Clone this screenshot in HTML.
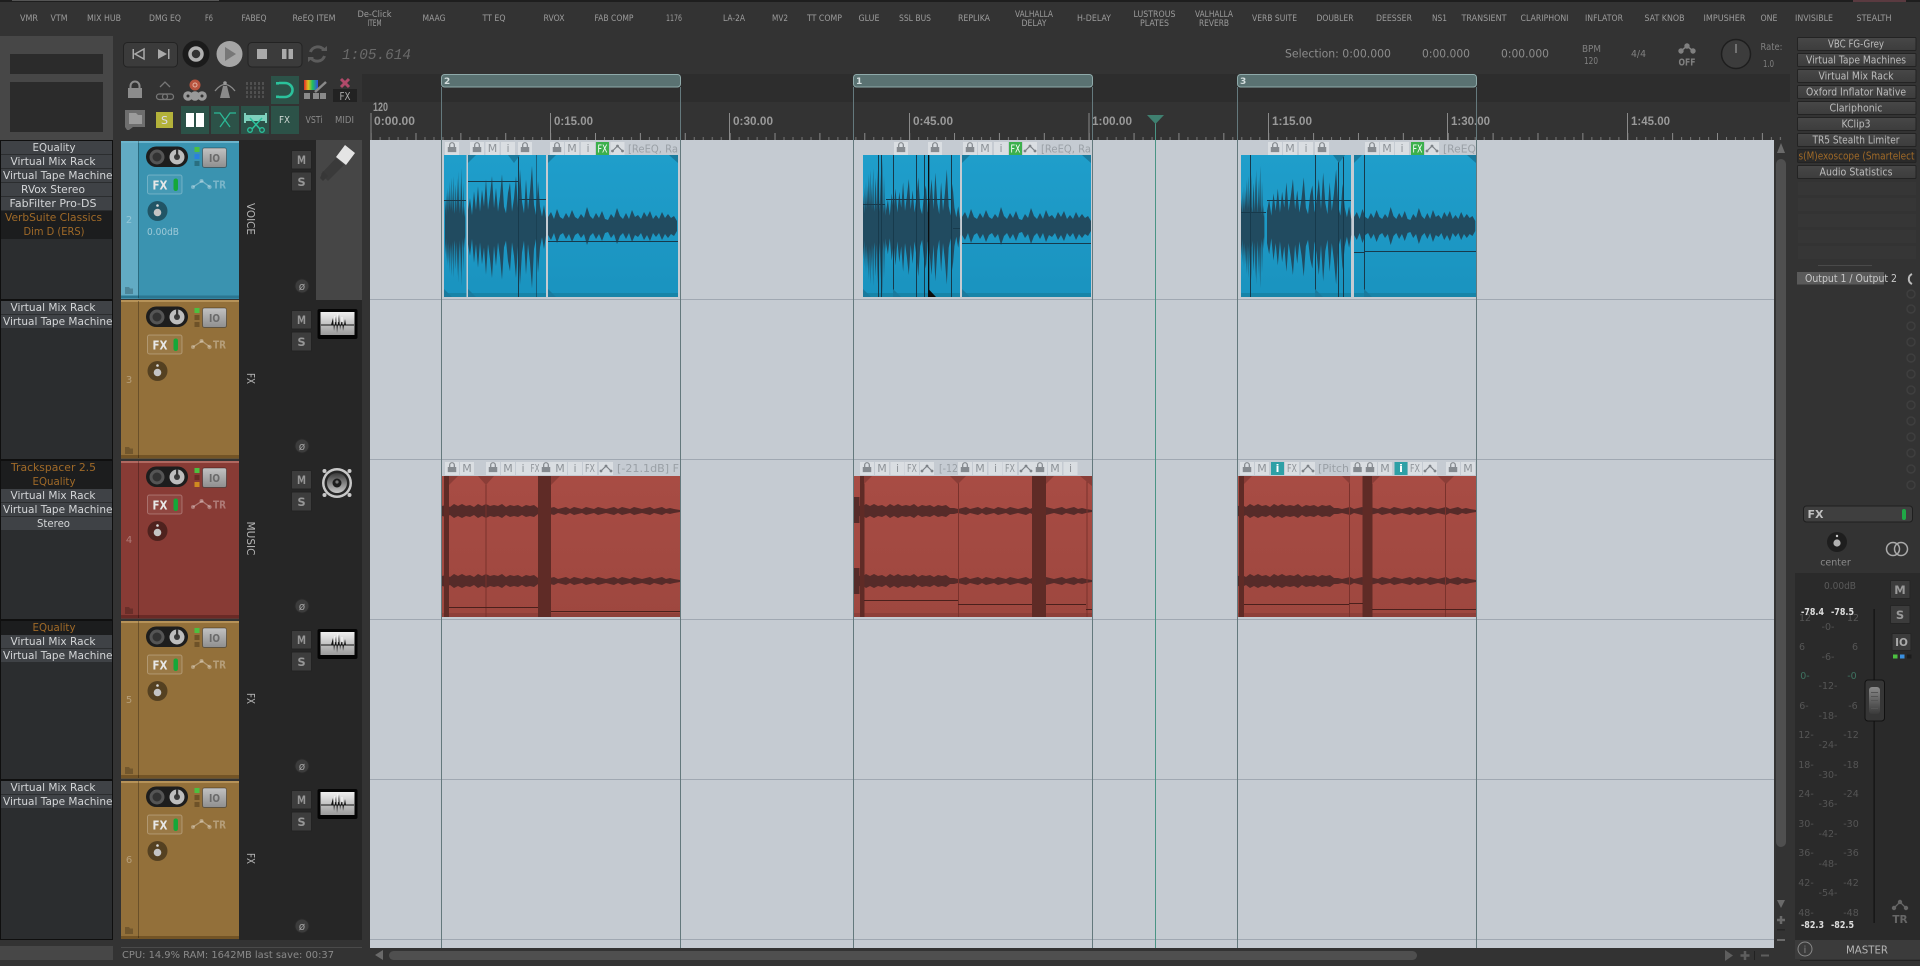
<!DOCTYPE html>
<html><head><meta charset="utf-8"><style>
html,body{margin:0;padding:0;background:#333;width:1920px;height:966px;overflow:hidden}
svg{display:block}
text{font-family:"DejaVu Sans","Liberation Sans",sans-serif}
.tb text{font-size:9px;fill:#9c9c9c;text-anchor:middle}
.fx text{font-size:10.5px;fill:#d4d6d8;text-anchor:middle}
.fx .o{fill:#a06a28}
.rb text{font-size:10.5px;fill:#bdbdbd;text-anchor:middle}
.rl text{font-family:"Liberation Sans",sans-serif;font-weight:bold;font-size:12px;fill:#999}
.ih text{font-size:11px;fill:#8f9499;text-anchor:middle}
.sc text{font-size:9.5px;fill:#555;text-anchor:middle}
.pk text{font-size:9.5px;fill:#ddd;font-weight:bold;text-anchor:middle}
</style></head><body>
<svg width="1920" height="966" viewBox="0 0 1920 966" xmlns="http://www.w3.org/2000/svg">
<defs>
<linearGradient id="bl" x1="0" y1="0" x2="0" y2="1"><stop offset="0" stop-color="#1f9ecb"/><stop offset="1" stop-color="#1a93bf"/></linearGradient>
<linearGradient id="rd" x1="0" y1="0" x2="0" y2="1"><stop offset="0" stop-color="#a84c44"/><stop offset="1" stop-color="#9e473f"/></linearGradient>
<linearGradient id="io" x1="0" y1="0" x2="0" y2="1"><stop offset="0" stop-color="#c2c2c2"/><stop offset="1" stop-color="#8e8e8e"/></linearGradient>
<linearGradient id="wi" x1="0" y1="0" x2="0" y2="1"><stop offset="0" stop-color="#f0f0f0"/><stop offset="1" stop-color="#9a9a9a"/></linearGradient>
<linearGradient id="fb" x1="0" y1="0" x2="0" y2="1"><stop offset="0" stop-color="#8a8a8a"/><stop offset="1" stop-color="#3a3a3a"/></linearGradient>
<linearGradient id="bt" x1="0" y1="0" x2="0" y2="1"><stop offset="0" stop-color="#484848"/><stop offset="1" stop-color="#3c3c3c"/></linearGradient>
<linearGradient id="cone" x1="0" y1="0" x2="0" y2="1"><stop offset="0" stop-color="#3a3a3a"/><stop offset="1" stop-color="#c8c8c8"/></linearGradient>
<linearGradient id="rb" x1="0" y1="0" x2="1" y2="0"><stop offset="0" stop-color="#e02828"/><stop offset=".3" stop-color="#e0c020"/><stop offset=".6" stop-color="#20c060"/><stop offset="1" stop-color="#3050e0"/></linearGradient>
<pattern id="tk" x="370.6" y="130" width="44.88" height="10" patternUnits="userSpaceOnUse">
<rect x="0" y="3" width="1" height="7" fill="#8a8a8a"/><rect x="9" y="7" width="1" height="3" fill="#777"/><rect x="18" y="7" width="1" height="3" fill="#777"/><rect x="27" y="7" width="1" height="3" fill="#777"/><rect x="36" y="7" width="1" height="3" fill="#777"/>
</pattern>

<path id="bh" d="M0 0V-20L2-34L4-14L6-42L8-20L10-48L12-18L14-44L16-24L18-56L20-20L22-38L24-60L26-22L28-46L30-18L32-36L34-62L36-24L38-16L40-40L42-52L44-18L46-34L48-60L50-22L52-68L54-30L56-16L58-56L60-20L62-42L64-72L66-26L68-14L70-54L72-24L74-12L76-26L78-10V0Z"/>
<g id="burst"><use href="#bh"/><use href="#bh" transform="scale(1,-1)"/></g>
<path id="th" d="M0 0V-9L3-14L6-7L9-17L12-9L15-7L18-13L21-8L24-16L27-9L30-7L33-12L36-8L39-19L42-10L45-7L48-13L51-8L54-15L57-7L60-6L63-12L66-8L69-18L72-10L75-7L78-13L81-7L84-16L87-9L90-11L93-7L96-14L99-9L102-15L105-7L108-11L111-7L114-14L117-8L120-12L123-8L126-10L129-5V0Z"/>
<g id="tail"><use href="#th"/><use href="#th" transform="scale(1,-1)"/></g>
<path id="mh" d="M0 0V-5L4-6L8-4L12-7L16-5L20-7L24-5L28-6L32-4L36-7L40-5L44-7L48-5L52-6L56-5L60-7L64-4L68-6L72-5L76-6L80-4L84-6L88-5L92-6L96-3L100-3L104-2L108-3L112-4L116-2L120-3L124-4L128-2L132-4L136-3L140-2L144-4L148-3L152-2L156-4L160-3L164-2L168-3L172-4L176-2L180-4L184-3L188-2L192-4L196-3L200-2L204-3L208-4L212-2L216-3L220-4L224-2L228-3L232-2L238-1V0Z"/>
<g id="mus"><use href="#mh"/><use href="#mh" transform="scale(1,-1)"/></g>

<path id="lock" d="M-3.5 0V-2.2A3.5 3.6 0 0 1 3.5-2.2V0H5V6H-5V0ZM-2-0H2V-2.2A2 2.2 0 0 0-2-2.2Z" fill-rule="evenodd"/>
<g id="lk"><rect x="-7" y="-6" width="14" height="13" fill="#dadee2"/><use href="#lock" fill="#858a8f" transform="translate(0,-1) scale(.85)"/></g>
<g id="ti"><rect x="-7" y="-6" width="14" height="13" fill="#dadee2"/></g>
<g id="en"><rect x="-7" y="-6" width="14" height="13" fill="#dadee2"/><path d="M-5 3L0-2L5 3" fill="none" stroke="#7d8287" stroke-width="1.200"/><circle cx="-5" cy="3" r="1.400" fill="#7d8287"/><circle cx="0" cy="-2" r="1.400" fill="#7d8287"/><circle cx="5" cy="3" r="1.400" fill="#7d8287"/></g>

<g id="tcp">
<rect x="146" y="6.500" width="42" height="20.500" rx="10.200" fill="#1d1d1d"/>
<circle cx="157" cy="17" r="6" fill="#333" stroke="#555" stroke-width="3"/>
<circle cx="177" cy="17" r="7.500" fill="#bdbdbd"/><circle cx="177" cy="17" r="3" fill="#3a3a3a"/><rect x="176" y="9" width="2.200" height="8" fill="#333"/>
<rect x="202.500" y="8" width="24" height="19.500" rx="2" fill="url(#io)" stroke="rgba(0,0,0,.35)"/>
<text x="214.500" y="22" font-size="11" font-weight="bold" text-anchor="middle" fill="#6a6a6a" textLength="11" lengthAdjust="spacingAndGlyphs">IO</text>
<rect x="147.500" y="35" width="34.500" height="19" rx="2" fill="rgba(255,255,255,.06)" stroke="rgba(255,255,255,.26)"/>
<text x="160" y="49.500" font-size="12.500" font-weight="bold" text-anchor="middle" fill="#e8e8e8" textLength="15" lengthAdjust="spacingAndGlyphs">FX</text>
<rect x="173.500" y="38.500" width="4.500" height="12.500" rx="2.200" fill="#14a838"/>
<path d="M193 47L202 41L210 47" fill="none" stroke="rgba(255,255,255,.32)" stroke-width="1.300"/>
<circle cx="193" cy="47" r="2" fill="rgba(255,255,255,.32)"/><circle cx="201.500" cy="41" r="2" fill="rgba(255,255,255,.32)"/><circle cx="209.500" cy="47" r="2.200" fill="rgba(255,255,255,.32)"/>
<text x="219.500" y="48.500" font-size="11" font-weight="bold" text-anchor="middle" fill="rgba(255,255,255,.32)" textLength="13" lengthAdjust="spacingAndGlyphs">TR</text>
<circle cx="157.500" cy="71" r="10" fill="rgba(0,0,0,.42)"/><circle cx="157.500" cy="72.500" r="3.800" fill="#c4c4c4"/><circle cx="157.500" cy="65.500" r="1.300" fill="#ddd"/>
<rect x="138" y="1" width="1" height="157" fill="rgba(0,0,0,.28)"/>
<path d="M125 147H129L130 148.500H133V154H125Z" fill="rgba(0,0,0,.22)"/>
<rect x="291.500" y="10.500" width="20" height="18.500" rx="1" fill="#3d3d3d" stroke="#232323"/>
<text x="301.500" y="24" font-size="11.500" font-weight="bold" text-anchor="middle" fill="#969696" textLength="9" lengthAdjust="spacingAndGlyphs">M</text>
<rect x="291.500" y="32" width="20" height="19" rx="1" fill="#3d3d3d" stroke="#232323"/>
<text x="301.500" y="46" font-size="11.500" font-weight="bold" text-anchor="middle" fill="#969696">S</text>
<circle cx="302" cy="146" r="7" fill="#3c3c3c" stroke="#2a2a2a"/>
<text x="302" y="150" font-size="10.500" text-anchor="middle" fill="#a0a0a0">ø</text>
</g>
<g id="wicon">
<rect x="317.500" y="309" width="40" height="30" rx="2" fill="#050505"/>
<rect x="320.500" y="312" width="34" height="23" fill="url(#wi)"/>
<path d="M321 325H354" stroke="#111" stroke-width="1"/>
<path d="M331 325L333 318L334 331L336 316L337 333L339 314L340 330L342 318L343 331L345 319L346 325Z" fill="#111"/>
<path d="M335 316V322M338 314V322M342 317V322" stroke="#fff" stroke-width="1"/>
</g>
</defs>

<!-- base -->
<rect width="1920" height="966" fill="#333"/>
<rect width="1920" height="2" fill="#1e1e1e"/>
<rect x="12" width="207" height="1" fill="#555"/>
<rect x="1853" width="53" height="2" fill="#5a3a40"/>

<!-- toolbar labels -->
<g class="tb">
<text x="29" y="21" textLength="18" lengthAdjust="spacingAndGlyphs">VMR</text>
<text x="59" y="21" textLength="17" lengthAdjust="spacingAndGlyphs">VTM</text>
<text x="104" y="21" textLength="34" lengthAdjust="spacingAndGlyphs">MIX HUB</text>
<text x="165" y="21" textLength="32" lengthAdjust="spacingAndGlyphs">DMG EQ</text>
<text x="209" y="21" textLength="8" lengthAdjust="spacingAndGlyphs">F6</text>
<text x="254" y="21" textLength="25" lengthAdjust="spacingAndGlyphs">FABEQ</text>
<text x="314" y="21" textLength="43" lengthAdjust="spacingAndGlyphs">ReEQ ITEM</text>
<text x="374.500" y="17" textLength="34" lengthAdjust="spacingAndGlyphs">De-Click</text>
<text x="374.500" y="26" textLength="14" lengthAdjust="spacingAndGlyphs">ITEM</text>
<text x="434" y="21" textLength="23" lengthAdjust="spacingAndGlyphs">MAAG</text>
<text x="494" y="21" textLength="23" lengthAdjust="spacingAndGlyphs">TT EQ</text>
<text x="554" y="21" textLength="21" lengthAdjust="spacingAndGlyphs">RVOX</text>
<text x="614" y="21" textLength="39" lengthAdjust="spacingAndGlyphs">FAB COMP</text>
<text x="674" y="21" textLength="16" lengthAdjust="spacingAndGlyphs">1176</text>
<text x="734" y="21" textLength="22" lengthAdjust="spacingAndGlyphs">LA-2A</text>
<text x="780" y="21" textLength="16" lengthAdjust="spacingAndGlyphs">MV2</text>
<text x="824.500" y="21" textLength="35" lengthAdjust="spacingAndGlyphs">TT COMP</text>
<text x="869" y="21" textLength="21" lengthAdjust="spacingAndGlyphs">GLUE</text>
<text x="915" y="21" textLength="32" lengthAdjust="spacingAndGlyphs">SSL BUS</text>
<text x="974" y="21" textLength="32" lengthAdjust="spacingAndGlyphs">REPLIKA</text>
<text x="1034" y="17" textLength="38" lengthAdjust="spacingAndGlyphs">VALHALLA</text>
<text x="1034" y="26" textLength="25" lengthAdjust="spacingAndGlyphs">DELAY</text>
<text x="1094" y="21" textLength="34" lengthAdjust="spacingAndGlyphs">H-DELAY</text>
<text x="1154.500" y="17" textLength="42" lengthAdjust="spacingAndGlyphs">LUSTROUS</text>
<text x="1154.500" y="26" textLength="29" lengthAdjust="spacingAndGlyphs">PLATES</text>
<text x="1214" y="17" textLength="38" lengthAdjust="spacingAndGlyphs">VALHALLA</text>
<text x="1214" y="26" textLength="30" lengthAdjust="spacingAndGlyphs">REVERB</text>
<text x="1274.500" y="21" textLength="45" lengthAdjust="spacingAndGlyphs">VERB SUITE</text>
<text x="1335" y="21" textLength="37" lengthAdjust="spacingAndGlyphs">DOUBLER</text>
<text x="1394" y="21" textLength="36" lengthAdjust="spacingAndGlyphs">DEESSER</text>
<text x="1439.500" y="21" textLength="15" lengthAdjust="spacingAndGlyphs">NS1</text>
<text x="1484" y="21" textLength="45" lengthAdjust="spacingAndGlyphs">TRANSIENT</text>
<text x="1544.500" y="21" textLength="48" lengthAdjust="spacingAndGlyphs">CLARIPHONI</text>
<text x="1604" y="21" textLength="38" lengthAdjust="spacingAndGlyphs">INFLATOR</text>
<text x="1664.500" y="21" textLength="40" lengthAdjust="spacingAndGlyphs">SAT KNOB</text>
<text x="1724.500" y="21" textLength="42" lengthAdjust="spacingAndGlyphs">IMPUSHER</text>
<text x="1769" y="21" textLength="17" lengthAdjust="spacingAndGlyphs">ONE</text>
<text x="1814" y="21" textLength="38" lengthAdjust="spacingAndGlyphs">INVISIBLE</text>
<text x="1874" y="21" textLength="35" lengthAdjust="spacingAndGlyphs">STEALTH</text>
</g>

<!-- left top box -->
<rect x="0" y="36" width="113" height="104" fill="#474747"/>
<rect x="10" y="54" width="93" height="20" fill="#2b2b2b"/>
<rect x="10" y="82" width="93" height="50" fill="#2b2b2b"/>

<!-- transport -->
<rect x="123.500" y="42.500" width="54" height="24.500" rx="4" fill="#3b3b3b" stroke="#232323"/>
<rect x="132.500" y="49" width="1.500" height="10" fill="#aaa"/><path d="M144 49L135 54L144 59Z" fill="none" stroke="#aaa" stroke-width="1.500"/>
<path d="M158 49L167 54L158 59Z" fill="#aaa"/><rect x="168" y="49" width="1.500" height="10" fill="#aaa"/>
<circle cx="196" cy="54" r="13.500" fill="#1b1b1b"/><circle cx="196" cy="54" r="6" fill="#333" stroke="#b0b0b0" stroke-width="3.500"/>
<circle cx="229.500" cy="54" r="13" fill="#a6a6a6"/><path d="M225 47L236 54L225 61Z" fill="#777"/>
<rect x="248" y="42.500" width="54" height="24.500" rx="4" fill="#3b3b3b" stroke="#232323"/>
<rect x="257" y="49" width="10" height="10" fill="#aaa"/><rect x="282" y="49" width="4.500" height="10" fill="#aaa"/><rect x="288.500" y="49" width="4.500" height="10" fill="#aaa"/>
<path d="M310.500 52A7.500 7 0 0 1 324 50M324.500 56A7.500 7 0 0 1 311 58" fill="none" stroke="#5c5c5c" stroke-width="3"/>
<path d="M321 51H327V46ZM314 57H308V62Z" fill="#5c5c5c"/>
<text x="342" y="59" font-size="15" style="font-family:'Liberation Mono',monospace;font-style:italic" fill="#6a6a6a" textLength="69" lengthAdjust="spacingAndGlyphs">1:05.614</text>

<!-- icon row 1 -->
<g transform="translate(135,90)"><rect x="-7" y="-2" width="14" height="10" fill="#8c8c8c"/><path d="M-4.500-2V-4A4.500 4.500 0 0 1 4.500-4V-2" fill="none" stroke="#8c8c8c" stroke-width="2"/></g>
<g fill="none" stroke="#777" stroke-width="1.300"><path d="M160 87L165 82L170 87"/><rect x="156.500" y="94" width="11" height="5.500" rx="2.700"/><rect x="162.500" y="94" width="11" height="5.500" rx="2.700"/></g>
<circle cx="195" cy="85" r="5.500" fill="#b8543e"/><circle cx="195" cy="85" r="2" fill="none" stroke="#e4b0a0"/>
<circle cx="188" cy="96" r="4.800" fill="#999"/><circle cx="195" cy="96" r="4.800" fill="#999"/><circle cx="202" cy="96" r="4.800" fill="#999"/>
<circle cx="188" cy="96" r="1.500" fill="#333"/><circle cx="202" cy="96" r="1.500" fill="#333"/>
<path d="M223 86H227L230 98H220Z" fill="#8a8a8a"/><path d="M215 91Q225 78 235 91" fill="none" stroke="#8a8a8a" stroke-width="1.300"/><circle cx="225" cy="83" r="1.800" fill="#999"/>
<g stroke="#6e6e6e" stroke-width="1" stroke-dasharray="3 1.500"><path d="M247 82V98M251 82V98M255 82V98M259 82V98M263 82V98"/></g>
<rect x="271" y="76" width="28" height="28" fill="#2c5248"/>
<path d="M279 83H285A7.500 7 0 0 1 285 97H279" fill="none" stroke="#2bc29c" stroke-width="2.600"/>
<rect x="276" y="82" width="3" height="2.600" fill="#2bc29c"/><rect x="276" y="95.500" width="3" height="2.600" fill="#2bc29c"/>
<rect x="304" y="80" width="14" height="10" fill="url(#rb)"/>
<path d="M315 92L326 82" stroke="#8a8a8a" stroke-width="2.500"/><rect x="304" y="93" width="6" height="6" fill="#8a8a8a"/><rect x="313" y="93" width="6" height="6" fill="#8a8a8a"/><rect x="320" y="93" width="6" height="6" fill="#8a8a8a"/>
<path d="M341 79L349 87M349 79L341 87" stroke="#b04a6a" stroke-width="3"/>
<rect x="333" y="89" width="24" height="13" fill="#222"/>
<text x="345" y="100" font-size="10.500" text-anchor="middle" fill="#aaa" textLength="11" lengthAdjust="spacingAndGlyphs">FX</text>

<!-- icon row 2 -->
<path d="M125 110H145V127H133L129 130H127L125 127Z" fill="#6e6e6e"/><path d="M129 113H136L138 115H142V124H129Z" fill="#9b9b9b"/>
<rect x="156" y="112" width="17" height="16" fill="#b3b23a"/><text x="164.500" y="124" font-size="11" text-anchor="middle" fill="#dde">S</text>
<rect x="181" y="106" width="28" height="28" fill="#2c5248"/><rect x="186" y="113" width="8" height="14" fill="#fff"/><rect x="196" y="113" width="8" height="14" fill="#fff"/>
<rect x="211" y="106" width="28" height="28" fill="#2c5248"/><path d="M214 113H220L230 127M236 113H230L220 127" fill="none" stroke="#2bb896" stroke-width="1.300"/>
<rect x="241" y="106" width="28" height="28" fill="#2c5248"/><rect x="245" y="115" width="21" height="6" fill="#7ed0bc"/><rect x="244" y="113" width="2" height="10" fill="#7ed0bc"/><rect x="265" y="113" width="2" height="10" fill="#7ed0bc"/>
<path d="M250 118L260 129M262 118L252 129" stroke="#2bc29c" stroke-width="1.500"/><circle cx="250" cy="130" r="2.300" fill="none" stroke="#2bc29c" stroke-width="1.300"/><circle cx="262" cy="130" r="2.300" fill="none" stroke="#2bc29c" stroke-width="1.300"/>
<rect x="271" y="106" width="28" height="28" fill="#2c5248"/><text x="284.500" y="123" font-size="9.500" text-anchor="middle" fill="#cfd8d4" textLength="11" lengthAdjust="spacingAndGlyphs">FX</text>
<text x="314" y="123" font-size="9.500" text-anchor="middle" fill="#8a8a8a" textLength="17" lengthAdjust="spacingAndGlyphs">VSTi</text>
<text x="344.500" y="123" font-size="9.500" text-anchor="middle" fill="#8a8a8a" textLength="19" lengthAdjust="spacingAndGlyphs">MIDI</text>

<!-- info right -->
<g font-size="11.500" fill="#8c8c8c">
<text x="1285" y="57.500" textLength="106" lengthAdjust="spacingAndGlyphs">Selection: 0:00.000</text>
<text x="1422" y="57.500" textLength="48" lengthAdjust="spacingAndGlyphs">0:00.000</text>
<text x="1501" y="57.500" textLength="48" lengthAdjust="spacingAndGlyphs">0:00.000</text>
</g>
<g font-size="9.500" fill="#808080" text-anchor="middle">
<text x="1591.500" y="52" textLength="19" lengthAdjust="spacingAndGlyphs">BPM</text>
<text x="1591" y="64" textLength="14" lengthAdjust="spacingAndGlyphs">120</text>
<text x="1638.500" y="57" textLength="15" lengthAdjust="spacingAndGlyphs">4/4</text>
<text x="1771.500" y="50" textLength="22" lengthAdjust="spacingAndGlyphs">Rate:</text>
<text x="1768.500" y="67" textLength="11" lengthAdjust="spacingAndGlyphs">1.0</text>
</g>
<path d="M1681 51L1687 46L1693 51" fill="none" stroke="#808080" stroke-width="1.500"/><circle cx="1681" cy="51" r="2.700" fill="#808080"/><circle cx="1687" cy="46" r="2.700" fill="#808080"/><circle cx="1693" cy="51" r="2.700" fill="#808080"/>
<text x="1687" y="65.500" font-size="9.500" font-weight="bold" text-anchor="middle" fill="#808080" textLength="17" lengthAdjust="spacingAndGlyphs">OFF</text>
<circle cx="1736" cy="54" r="14.500" fill="#3c3c3c" stroke="#1e1e1e" stroke-width="1.500"/><rect x="1735.500" y="44" width="1" height="9" fill="#aaa"/>

<!-- ruler -->
<rect x="362" y="74" width="1428" height="28" fill="#2d2d2d"/>
<rect x="370" y="130" width="1418" height="10" fill="url(#tk)"/>
<g fill="#8a8a8a"><rect x="370.500" y="113" width="1" height="27"/><rect x="550" y="113" width="1" height="27"/><rect x="729" y="113" width="1" height="27"/><rect x="909" y="113" width="1" height="27"/><rect x="1088.500" y="113" width="1" height="27"/><rect x="1268" y="113" width="1" height="27"/><rect x="1447" y="113" width="1" height="27"/><rect x="1627" y="113" width="1" height="27"/></g>
<g class="rl">
<text x="373" y="111" font-size="10" textLength="15" lengthAdjust="spacingAndGlyphs">120</text>
<text x="374" y="125" textLength="41" lengthAdjust="spacingAndGlyphs">0:00.00</text>
<text x="554" y="125" textLength="39" lengthAdjust="spacingAndGlyphs">0:15.00</text>
<text x="733" y="125" textLength="40" lengthAdjust="spacingAndGlyphs">0:30.00</text>
<text x="913" y="125" textLength="40" lengthAdjust="spacingAndGlyphs">0:45.00</text>
<text x="1092" y="125" textLength="40" lengthAdjust="spacingAndGlyphs">1:00.00</text>
<text x="1272" y="125" textLength="40" lengthAdjust="spacingAndGlyphs">1:15.00</text>
<text x="1451" y="125" textLength="39" lengthAdjust="spacingAndGlyphs">1:30.00</text>
<text x="1631" y="125" textLength="39" lengthAdjust="spacingAndGlyphs">1:45.00</text>
</g>

<!-- region markers -->
<g fill="#5a7272" stroke="#8faaaa" stroke-width="1">
<rect x="441.500" y="74.500" width="239" height="12.500" rx="3"/><rect x="853.500" y="74.500" width="239" height="12.500" rx="3"/><rect x="1237.500" y="74.500" width="239" height="12.500" rx="3"/>
</g>
<g font-size="9" font-weight="bold" fill="#d4dede"><text x="444" y="84">2</text><text x="856" y="84">1</text><text x="1240" y="84">3</text></g>

<!-- left FX lists -->
<rect x="0.500" y="140.500" width="112" height="799" fill="#2b2d2f" stroke="#0f0f0f"/>
<g fill="#0f0f0f"><rect x="0" y="299" width="113" height="2"/><rect x="0" y="459" width="113" height="2"/><rect x="0" y="619" width="113" height="2"/><rect x="0" y="779" width="113" height="2"/></g>
<g fill="#3f4246">
<rect x="1" y="141" width="111" height="13"/><rect x="1" y="155" width="111" height="13"/><rect x="1" y="169" width="111" height="13"/><rect x="1" y="183" width="111" height="13"/><rect x="1" y="197" width="111" height="13"/>
<rect x="1" y="301" width="111" height="13"/><rect x="1" y="315" width="111" height="13"/>
<rect x="1" y="489" width="111" height="13"/><rect x="1" y="503" width="111" height="13"/><rect x="1" y="517" width="111" height="13"/>
<rect x="1" y="635" width="111" height="13"/><rect x="1" y="649" width="111" height="13"/>
<rect x="1" y="781" width="111" height="13"/><rect x="1" y="795" width="111" height="13"/>
</g>
<g fill="#1c1d1e"><rect x="1" y="211" width="111" height="28"/><rect x="1" y="461" width="111" height="28"/><rect x="1" y="621" width="111" height="14"/></g>
<g class="fx">
<text x="54" y="151" textLength="43" lengthAdjust="spacingAndGlyphs">EQuality</text>
<text x="53" y="165" textLength="85" lengthAdjust="spacingAndGlyphs">Virtual Mix Rack</text>
<text x="3" y="179" style="text-anchor:start" textLength="115" lengthAdjust="spacingAndGlyphs">Virtual Tape Machines</text>
<text x="53" y="193" textLength="64" lengthAdjust="spacingAndGlyphs">RVox Stereo</text>
<text x="53" y="207" textLength="87" lengthAdjust="spacingAndGlyphs">FabFilter Pro-DS</text>
<text class="o" x="53.500" y="221" textLength="97" lengthAdjust="spacingAndGlyphs">VerbSuite Classics</text>
<text class="o" x="54" y="235" textLength="61" lengthAdjust="spacingAndGlyphs">Dim D (ERS)</text>
<text x="53" y="311" textLength="85" lengthAdjust="spacingAndGlyphs">Virtual Mix Rack</text>
<text x="3" y="325" style="text-anchor:start" textLength="115" lengthAdjust="spacingAndGlyphs">Virtual Tape Machines</text>
<text class="o" x="53.500" y="471" textLength="85" lengthAdjust="spacingAndGlyphs">Trackspacer 2.5</text>
<text class="o" x="54" y="485" textLength="43" lengthAdjust="spacingAndGlyphs">EQuality</text>
<text x="53" y="499" textLength="85" lengthAdjust="spacingAndGlyphs">Virtual Mix Rack</text>
<text x="3" y="513" style="text-anchor:start" textLength="115" lengthAdjust="spacingAndGlyphs">Virtual Tape Machines</text>
<text x="53.500" y="527" textLength="33" lengthAdjust="spacingAndGlyphs">Stereo</text>
<text class="o" x="54" y="631" textLength="43" lengthAdjust="spacingAndGlyphs">EQuality</text>
<text x="53" y="645" textLength="85" lengthAdjust="spacingAndGlyphs">Virtual Mix Rack</text>
<text x="3" y="659" style="text-anchor:start" textLength="115" lengthAdjust="spacingAndGlyphs">Virtual Tape Machines</text>
<text x="53" y="791" textLength="85" lengthAdjust="spacingAndGlyphs">Virtual Mix Rack</text>
<text x="3" y="805" style="text-anchor:start" textLength="115" lengthAdjust="spacingAndGlyphs">Virtual Tape Machines</text>
</g>
<rect x="112" y="140" width="9" height="800" fill="#333"/><rect x="112" y="140" width="1" height="800" fill="#0f0f0f"/>

<!-- TCP backgrounds -->
<rect x="239" y="140" width="123" height="800" fill="#262626"/>
<rect x="316" y="140" width="46" height="160" fill="#464646"/>
<rect x="121" y="141" width="118" height="158" fill="#3a93b0"/><rect x="121" y="141" width="17" height="158" fill="#62abc4"/><rect x="121" y="141" width="118" height="2" fill="#6cb4cc"/><rect x="121" y="295.500" width="118" height="3" fill="#2b7690"/>
<rect x="121" y="300" width="118" height="158.500" fill="#93703a"/><rect x="121" y="300" width="118" height="2" fill="#b69258"/><rect x="121" y="455" width="118" height="3" fill="#735426"/>
<rect x="121" y="461" width="118" height="157.500" fill="#883b35"/><rect x="121" y="461" width="118" height="2" fill="#b06860"/><rect x="121" y="615" width="118" height="3" fill="#6a2a26"/>
<rect x="121" y="621" width="118" height="157.500" fill="#93703a"/><rect x="121" y="621" width="118" height="2" fill="#b69258"/><rect x="121" y="775" width="118" height="3" fill="#735426"/>
<rect x="121" y="781" width="118" height="158" fill="#93703a"/><rect x="121" y="781" width="118" height="2" fill="#b69258"/><rect x="121" y="936" width="118" height="3" fill="#735426"/>
<use href="#tcp" transform="translate(0,140)"/><use href="#tcp" transform="translate(0,300)"/><use href="#tcp" transform="translate(0,460)"/><use href="#tcp" transform="translate(0,620)"/><use href="#tcp" transform="translate(0,780)"/>
<g>
<rect x="194.500" y="147" width="5" height="5" fill="#4cc040"/><rect x="194.500" y="154" width="5" height="5" fill="#2a80e0"/><rect x="194.500" y="161" width="5" height="5" fill="#2a6f80"/>
<rect x="194.500" y="308" width="5" height="5" fill="#4cc040"/><rect x="194.500" y="315" width="5" height="5" fill="#6e5228"/><rect x="194.500" y="322" width="5" height="5" fill="#6e5228"/>
<rect x="194.500" y="468" width="5" height="5" fill="#4cc040"/><rect x="194.500" y="475" width="5" height="5" fill="#6a2a26"/><rect x="194.500" y="482" width="5" height="5" fill="#d08a20"/>
<rect x="194.500" y="628" width="5" height="5" fill="#4cc040"/><rect x="194.500" y="635" width="5" height="5" fill="#6e5228"/><rect x="194.500" y="642" width="5" height="5" fill="#6e5228"/>
<rect x="194.500" y="788" width="5" height="5" fill="#4cc040"/><rect x="194.500" y="795" width="5" height="5" fill="#6e5228"/><rect x="194.500" y="802" width="5" height="5" fill="#6e5228"/>
</g>
<g font-size="10" text-anchor="middle" fill="rgba(255,255,255,.32)">
<text x="129" y="223">2</text><text x="129" y="383">3</text><text x="129" y="543">4</text><text x="129" y="703">5</text><text x="129" y="863">6</text>
</g>
<text x="147" y="235" font-size="10" fill="rgba(255,255,255,.5)" textLength="32" lengthAdjust="spacingAndGlyphs">0.00dB</text>
<g font-size="10.500" fill="#b5b5b5" text-anchor="middle">
<text transform="translate(247,219) rotate(90)" textLength="32" lengthAdjust="spacingAndGlyphs">VOICE</text>
<text transform="translate(247,378.500) rotate(90)" textLength="11" lengthAdjust="spacingAndGlyphs">FX</text>
<text transform="translate(247,538.500) rotate(90)" textLength="34" lengthAdjust="spacingAndGlyphs">MUSIC</text>
<text transform="translate(247,698.500) rotate(90)" textLength="11" lengthAdjust="spacingAndGlyphs">FX</text>
<text transform="translate(247,858.500) rotate(90)" textLength="11" lengthAdjust="spacingAndGlyphs">FX</text>
</g>
<!-- track icons -->
<path d="M336 158L344 165L328 181L321 174Z" fill="#3a3a3a"/><path d="M323 171L328 176L323 181L320 178Z" fill="#373737"/>
<path d="M345 145L355 153L346 165L336 157Z" fill="#e4e4e4"/>
<use href="#wicon"/>
<use href="#wicon" transform="translate(0,320)"/>
<use href="#wicon" transform="translate(0,480)"/>
<circle cx="337" cy="483" r="15" fill="#c8c8c8"/><circle cx="337" cy="483" r="12.500" fill="#262626"/><circle cx="337" cy="483" r="10" fill="url(#cone)"/><circle cx="337" cy="483" r="4.500" fill="#1c1c1c"/><circle cx="337" cy="482" r="1.600" fill="#777"/>
<g fill="#c8c8c8"><circle cx="324.500" cy="471" r="2"/><circle cx="349.500" cy="471" r="2"/><circle cx="324.500" cy="495" r="2"/><circle cx="349.500" cy="495" r="2"/></g>

<!-- arrange -->
<rect x="370" y="140" width="1404" height="808" fill="#c5cbd2"/>
<g fill="#a0a8b2"><rect x="370" y="299" width="1404" height="1"/><rect x="370" y="459" width="1404" height="1"/><rect x="370" y="619" width="1404" height="1"/><rect x="370" y="779" width="1404" height="1"/><rect x="370" y="939" width="1404" height="1"/></g>

<!-- blue items -->
<g fill="url(#bl)">
<rect x="444" y="155" width="22.500" height="142"/><rect x="468" y="155" width="78" height="142"/><rect x="548" y="155" width="130" height="142"/>
<rect x="863" y="155" width="97" height="142"/><rect x="962" y="155" width="129" height="142"/>
<rect x="1241" y="155" width="110" height="142"/><rect x="1354" y="155" width="122" height="142"/>
</g>
<g fill="#1784a8">
<rect x="444" y="293" width="22.500" height="4"/><rect x="468" y="293" width="78" height="4"/><rect x="548" y="293" width="130" height="4"/>
<rect x="863" y="293" width="97" height="4"/><rect x="962" y="293" width="129" height="4"/>
<rect x="1241" y="293" width="110" height="4"/><rect x="1354" y="293" width="122" height="4"/>
</g>
<g fill="#214b60">
<use href="#burst" transform="translate(445,227) scale(.26,.82)"/>
<use href="#burst" transform="translate(468,227) scale(1,.85)"/>
<use href="#tail" transform="translate(548,226)"/>
<use href="#burst" transform="translate(863,227) scale(.3,.95)"/>
<use href="#burst" transform="translate(886,227) scale(.95,.8)"/>
<use href="#tail" transform="translate(962,226)"/>
<use href="#burst" transform="translate(1241,227) scale(.3,.85)"/>
<use href="#burst" transform="translate(1267,227) scale(1.08,.8)"/>
<use href="#tail" transform="translate(1354,226) scale(.94,1)"/>
</g>
<g fill="#173a4c">
<rect x="444" y="200" width="22" height="1"/><rect x="468" y="181" width="51" height="1"/><rect x="519" y="199" width="27" height="1"/><rect x="548" y="241" width="130" height="1"/>
<rect x="863" y="204" width="22" height="1"/><rect x="886" y="199" width="65" height="1"/><rect x="953" y="228" width="7" height="1"/><rect x="962" y="243" width="129" height="1"/>
<rect x="1241" y="212" width="25" height="1"/><rect x="1267" y="200" width="84" height="1"/><rect x="1354" y="252" width="10" height="1"/><rect x="1364" y="251" width="112" height="1"/>
<rect x="518" y="155" width="1" height="142"/><rect x="536" y="155" width="1" height="142" opacity=".6"/>
<rect x="878" y="155" width="1" height="142"/><rect x="881" y="155" width="1" height="142"/><rect x="893" y="155" width="1" height="142"/><rect x="916" y="155" width="1" height="142"/><rect x="924" y="155" width="1" height="142"/><rect x="951" y="155" width="1" height="142"/>
<rect x="1250" y="155" width="1" height="142"/><rect x="1315" y="155" width="1" height="142"/><rect x="1338" y="155" width="1" height="142"/><rect x="1343" y="155" width="1" height="142"/><rect x="1364" y="155" width="1" height="142"/>
</g>
<rect x="928" y="155" width="1.300" height="142" fill="#0c0c0c"/><path d="M928.500 289L936 297H928.500Z" fill="#0c0c0c"/>
<g fill="#1a7a9d">
<path d="M468 155H476L468 163ZM548 155H556L548 163ZM669 155H678V163ZM962 155H970L962 163ZM1082 155H1091V163ZM1354 155H1362L1354 163ZM1467 155H1476V163ZM1333 155H1345L1339 163ZM508 155H520L514 163Z"/>
<path d="M444 297V289L452 297ZM468 297V289L476 297ZM548 297V289L556 297ZM863 297V289L871 297ZM962 297V289L970 297ZM1315 297V289L1323 297ZM1364 297V289L1372 297ZM893 297V289L901 297Z"/>
</g>

<!-- red items -->
<g fill="url(#rd)"><rect x="442" y="476" width="238" height="141"/><rect x="853.500" y="476" width="238.500" height="141"/><rect x="1238" y="476" width="238" height="141"/></g>
<g fill="#8e3f39"><rect x="442" y="613" width="238" height="4"/><rect x="853.500" y="613" width="238.500" height="4"/><rect x="1238" y="613" width="238" height="4"/></g>
<g fill="#562b29">
<use href="#mus" transform="translate(442,511)"/><use href="#mus" transform="translate(442,581)"/>
<use href="#mus" transform="translate(854,511)"/><use href="#mus" transform="translate(854,581)"/>
<use href="#mus" transform="translate(1238,511)"/><use href="#mus" transform="translate(1238,581)"/>
<rect x="853.500" y="497" width="6" height="26"/><rect x="853.500" y="568" width="6" height="26"/>
</g>
<g fill="#5f2b26">
<rect x="444" y="476" width="5" height="141"/><rect x="538" y="476" width="13" height="141"/>
<rect x="860" y="476" width="4.500" height="141"/><rect x="1032" y="476" width="14" height="141"/>
<rect x="1239" y="476" width="5" height="141"/><rect x="1362.500" y="476" width="10" height="141"/>
</g>
<g fill="#7a322c">
<rect x="485.500" y="476" width="1" height="141"/><rect x="958" y="476" width="1" height="141"/><rect x="1086.500" y="476" width="1" height="141"/><rect x="1349" y="476" width="1" height="141"/><rect x="1445" y="476" width="1" height="141"/>
</g>
<g fill="#4a201c">
<rect x="449" y="607" width="89" height="1"/><rect x="551" y="611" width="129" height="1"/>
<rect x="864" y="600" width="94" height="1"/><rect x="958" y="604" width="74" height="1"/><rect x="1046" y="604" width="40" height="1"/><rect x="1086" y="609" width="6" height="1"/>
<rect x="1244" y="604" width="105" height="1"/><rect x="1349" y="603" width="14" height="1"/><rect x="1372" y="609" width="104" height="1"/>
</g>
<g fill="#8a3d37">
<path d="M449 476H458L449 485ZM478 476H494L486 485ZM551 476H560L551 485ZM864 476H872L864 484ZM950 476H966L958 484ZM1046 476H1054L1046 484ZM1080 476H1092V486ZM1244 476H1252L1244 484ZM1342 476H1350V484ZM1372 476H1380L1372 484ZM1438 476H1454L1446 484Z"/>
</g>

<!-- region & cursor lines -->
<g fill="#64797d"><rect x="441" y="87" width="1" height="861"/><rect x="680" y="87" width="1" height="861"/><rect x="853" y="87" width="1" height="861"/><rect x="1092" y="87" width="1" height="861"/><rect x="1237" y="87" width="1" height="861"/><rect x="1476" y="87" width="1" height="861"/></g>
<rect x="1155" y="120" width="1" height="828" fill="#4a9484"/>
<path d="M1147 115H1164L1155.500 124Z" fill="#3f8070"/>

<!-- item headers -->
<g class="ih">
<use href="#lk" x="452" y="148"/><use href="#lk" x="477" y="148"/><use href="#ti" x="492.500" y="148"/><text x="492.500" y="152">M</text><use href="#ti" x="508" y="148"/><text x="508" y="152">i</text><use href="#lk" x="525" y="148"/>
<use href="#lk" x="557" y="148"/><use href="#ti" x="572" y="148"/><text x="572" y="152">M</text><use href="#ti" x="588" y="148"/><text x="588" y="152">i</text>
<rect x="596" y="142" width="13" height="13" fill="#3cb04c"/><text x="602.500" y="152.500" style="fill:#fff" font-size="10" textLength="10" lengthAdjust="spacingAndGlyphs">FX</text><use href="#en" x="617.500" y="148"/>
<text x="653" y="152.500" textLength="50" lengthAdjust="spacingAndGlyphs" style="fill:#9aa0a6">[ReEQ, Ra</text>

<use href="#lk" x="901" y="148"/><use href="#lk" x="935" y="148"/><use href="#lk" x="970" y="148"/><use href="#ti" x="985" y="148"/><text x="985" y="152">M</text><use href="#ti" x="1001" y="148"/><text x="1001" y="152">i</text>
<rect x="1009" y="142" width="13" height="13" fill="#3cb04c"/><text x="1015.500" y="152.500" style="fill:#fff" font-size="10" textLength="10" lengthAdjust="spacingAndGlyphs">FX</text><use href="#en" x="1030" y="148"/>
<text x="1066" y="152.500" textLength="50" lengthAdjust="spacingAndGlyphs" style="fill:#9aa0a6">[ReEQ, Ra</text>

<use href="#lk" x="1275" y="148"/><use href="#ti" x="1290" y="148"/><text x="1290" y="152">M</text><use href="#ti" x="1306" y="148"/><text x="1306" y="152">i</text><use href="#lk" x="1322" y="148"/>
<use href="#lk" x="1372" y="148"/><use href="#ti" x="1387" y="148"/><text x="1387" y="152">M</text><use href="#ti" x="1402" y="148"/><text x="1402" y="152">i</text>
<rect x="1411" y="142" width="13" height="13" fill="#3cb04c"/><text x="1417.500" y="152.500" style="fill:#fff" font-size="10" textLength="10" lengthAdjust="spacingAndGlyphs">FX</text><use href="#en" x="1432" y="148"/>
<text x="1459.500" y="152.500" textLength="33" lengthAdjust="spacingAndGlyphs" style="fill:#9aa0a6">[ReEQ</text>

<use href="#lk" x="452" y="468"/><use href="#ti" x="467" y="468"/><text x="467" y="472">M</text>
<use href="#lk" x="493" y="468"/><use href="#ti" x="508" y="468"/><text x="508" y="472">M</text><use href="#ti" x="523" y="468"/><text x="523" y="472">i</text><use href="#ti" x="535" y="468"/><text x="535" y="472" font-size="10" textLength="9" lengthAdjust="spacingAndGlyphs">FX</text>
<use href="#lk" x="546" y="468"/><use href="#ti" x="560" y="468"/><text x="560" y="472">M</text><use href="#ti" x="575" y="468"/><text x="575" y="472">i</text><use href="#ti" x="590" y="468"/><text x="590" y="472" font-size="10" textLength="10" lengthAdjust="spacingAndGlyphs">FX</text><use href="#en" x="606" y="468"/>
<text x="648" y="472" textLength="62" lengthAdjust="spacingAndGlyphs" style="fill:#9aa0a6">[-21.1dB] F</text>

<use href="#lk" x="867" y="468"/><use href="#ti" x="882" y="468"/><text x="882" y="472">M</text><use href="#ti" x="897.500" y="468"/><text x="897.500" y="472">i</text><use href="#ti" x="912" y="468"/><text x="912" y="472" font-size="10" textLength="10" lengthAdjust="spacingAndGlyphs">FX</text><use href="#en" x="927" y="468"/><text x="948.500" y="472" textLength="19" lengthAdjust="spacingAndGlyphs" style="fill:#9aa0a6">[-12</text>
<use href="#lk" x="965" y="468"/><use href="#ti" x="980" y="468"/><text x="980" y="472">M</text><use href="#ti" x="995.500" y="468"/><text x="995.500" y="472">i</text><use href="#ti" x="1010" y="468"/><text x="1010" y="472" font-size="10" textLength="10" lengthAdjust="spacingAndGlyphs">FX</text><use href="#en" x="1026" y="468"/>
<use href="#lk" x="1040" y="468"/><use href="#ti" x="1055" y="468"/><text x="1055" y="472">M</text><use href="#ti" x="1070.500" y="468"/><text x="1070.500" y="472">i</text>

<use href="#lk" x="1247" y="468"/><use href="#ti" x="1262" y="468"/><text x="1262" y="472">M</text><rect x="1271" y="462" width="13" height="13" fill="#2ea0a6"/><text x="1277.500" y="472" style="fill:#fff;font-weight:bold">i</text><use href="#ti" x="1292" y="468"/><text x="1292" y="472" font-size="10" textLength="10" lengthAdjust="spacingAndGlyphs">FX</text><use href="#en" x="1308" y="468"/><text x="1333.500" y="472" textLength="31" lengthAdjust="spacingAndGlyphs" style="fill:#9aa0a6">[Pitch</text>
<use href="#lk" x="1357.500" y="468"/><use href="#lk" x="1370" y="468"/><use href="#ti" x="1385" y="468"/><text x="1385" y="472">M</text><rect x="1394.500" y="462" width="13" height="13" fill="#2ea0a6"/><text x="1401" y="472" style="fill:#fff;font-weight:bold">i</text><use href="#ti" x="1415" y="468"/><text x="1415" y="472" font-size="10" textLength="10" lengthAdjust="spacingAndGlyphs">FX</text><use href="#en" x="1430" y="468"/>
<use href="#lk" x="1453" y="468"/><use href="#ti" x="1468" y="468"/><text x="1468" y="472">M</text>
</g>

<!-- vertical scrollbar -->
<rect x="1774" y="140" width="16" height="826" fill="#333"/>
<path d="M1777 153L1781 143L1785 153Z" fill="#6a6a6a"/>
<rect x="1776" y="159" width="10" height="688" rx="5" fill="#4f4f4f"/>
<path d="M1777 900H1785L1781 908Z" fill="#6a6a6a"/>
<path d="M1781 916V924M1777 920H1785" stroke="#6a6a6a" stroke-width="2.500"/>
<rect x="1777" y="929" width="8" height="1.500" fill="#262626"/>
<rect x="1777" y="939" width="8" height="2" fill="#6a6a6a"/>

<!-- right panel -->
<g fill="url(#bt)" stroke="#232323">
<rect x="1797.500" y="37.500" width="118.500" height="13" rx="1"/><rect x="1797.500" y="53.500" width="118.500" height="13" rx="1"/><rect x="1797.500" y="69.500" width="118.500" height="13" rx="1"/><rect x="1797.500" y="85.500" width="118.500" height="13" rx="1"/><rect x="1797.500" y="101.500" width="118.500" height="13" rx="1"/><rect x="1797.500" y="117.500" width="118.500" height="13" rx="1"/><rect x="1797.500" y="133.500" width="118.500" height="13" rx="1"/><rect x="1797.500" y="165.500" width="118.500" height="13" rx="1"/>
</g>
<rect x="1797.500" y="149.500" width="118.500" height="13" rx="1" fill="#2a2a2a" stroke="#232323"/>
<g fill="#363636"><rect x="1798" y="182" width="118" height="13"/><rect x="1798" y="198" width="118" height="13"/><rect x="1798" y="214" width="118" height="13"/><rect x="1798" y="230" width="118" height="13"/><rect x="1798" y="246" width="118" height="13"/></g>
<g class="rb">
<text x="1856" y="47.500" textLength="56" lengthAdjust="spacingAndGlyphs">VBC FG-Grey</text>
<text x="1856" y="63.500" textLength="100" lengthAdjust="spacingAndGlyphs">Virtual Tape Machines</text>
<text x="1856" y="79.500" textLength="75" lengthAdjust="spacingAndGlyphs">Virtual Mix Rack</text>
<text x="1856" y="95.500" textLength="100" lengthAdjust="spacingAndGlyphs">Oxford Inflator Native</text>
<text x="1856" y="111.500" textLength="53" lengthAdjust="spacingAndGlyphs">Clariphonic</text>
<text x="1856" y="127.500" textLength="29" lengthAdjust="spacingAndGlyphs">KClip3</text>
<text x="1856" y="143.500" textLength="87" lengthAdjust="spacingAndGlyphs">TR5 Stealth Limiter</text>
<text x="1856.500" y="159.500" style="fill:#a06a28" textLength="116" lengthAdjust="spacingAndGlyphs">s(M)exoscope (Smartelect</text>
<text x="1856" y="175.500" textLength="73" lengthAdjust="spacingAndGlyphs">Audio Statistics</text>
</g>
<rect x="1818" y="265" width="54" height="1" fill="#4a4a4a"/>
<rect x="1797" y="272" width="87" height="12.500" fill="#5a5a5a"/>
<text x="1805" y="282" font-size="10.500" fill="#c8c8c8" textLength="92" lengthAdjust="spacingAndGlyphs">Output 1 / Output 2</text>
<path d="M1912 274A5.500 5.500 0 0 0 1912 284" fill="none" stroke="#bbb" stroke-width="2"/>
<g fill="none" stroke="#3f3f3f" stroke-width="1.500"><circle cx="1911" cy="294" r="4"/><circle cx="1911" cy="309" r="4"/><circle cx="1911" cy="326" r="4"/><circle cx="1911" cy="342" r="4"/><circle cx="1911" cy="358" r="4"/><circle cx="1911" cy="374" r="4"/><circle cx="1911" cy="390" r="4"/><circle cx="1911" cy="405" r="4"/><circle cx="1911" cy="421" r="4"/><circle cx="1911" cy="437" r="4"/><circle cx="1911" cy="453" r="4"/><circle cx="1911" cy="469" r="4"/><circle cx="1911" cy="485" r="4"/></g>

<!-- master -->
<rect x="1803.500" y="506" width="109" height="16" rx="3" fill="#3f3f3f" stroke="#1f1f1f"/>
<text x="1815.500" y="518" font-size="11" font-weight="bold" text-anchor="middle" fill="#c0c0c0">FX</text>
<rect x="1902" y="509" width="4" height="11" rx="2" fill="#1fa846"/>
<circle cx="1837" cy="542" r="10" fill="#1e1e1e"/><circle cx="1837" cy="543" r="3.600" fill="#b0b0b0"/><circle cx="1837" cy="536" r="1.200" fill="#ccc"/>
<text x="1835.500" y="565.500" font-size="9.500" text-anchor="middle" fill="#8a8a8a">center</text>
<circle cx="1893" cy="549" r="6.500" fill="none" stroke="#aaa" stroke-width="1.500"/><circle cx="1901" cy="549" r="6.500" fill="none" stroke="#aaa" stroke-width="1.500"/>
<rect x="1795" y="573" width="125" height="367" fill="#2a2a2a"/>
<text x="1840" y="589" font-size="9.500" text-anchor="middle" fill="#5a5a5a" textLength="32" lengthAdjust="spacingAndGlyphs">0.00dB</text>
<rect x="1890.500" y="580.500" width="19.500" height="18" rx="1" fill="#3c3c3c" stroke="#252525"/><text x="1900" y="594" font-size="11.500" font-weight="bold" text-anchor="middle" fill="#999">M</text>
<rect x="1890.500" y="605.500" width="19.500" height="18" rx="1" fill="#3c3c3c" stroke="#252525"/><text x="1900" y="619" font-size="11.500" font-weight="bold" text-anchor="middle" fill="#999">S</text>
<rect x="1892" y="633.500" width="19" height="17" rx="1" fill="#3c3c3c" stroke="#252525"/><text x="1901.500" y="646" font-size="10.500" font-weight="bold" text-anchor="middle" fill="#aaa">IO</text>
<rect x="1893" y="654.500" width="4.500" height="4" fill="#4cc040"/><rect x="1900" y="654.500" width="4.500" height="4" fill="#3a90e0"/><rect x="1907" y="654.500" width="4.500" height="4" fill="#1c1c1c"/>
<rect x="1873.500" y="609" width="1.200" height="314" fill="#111"/>
<rect x="1865" y="680" width="19.500" height="41" rx="3" fill="#363636" stroke="#111"/><rect x="1869" y="687" width="11" height="27" rx="3" fill="url(#fb)"/><g fill="#555"><rect x="1871" y="692" width="7" height="1"/><rect x="1871" y="696" width="7" height="1"/><rect x="1871" y="700" width="7" height="1"/><rect x="1871" y="704" width="7" height="1"/><rect x="1871" y="708" width="7" height="1"/></g>
<g class="sc">
<text x="1805" y="621">12</text><text x="1853" y="621">12</text><text x="1802" y="650">6</text><text x="1855" y="650">6</text>
<text x="1805" y="679" style="fill:#3e7260">0-</text><text x="1852" y="679" style="fill:#3e7260">-0</text>
<text x="1804" y="709">6-</text><text x="1853" y="709">-6</text><text x="1806" y="738">12-</text><text x="1851" y="738">-12</text>
<text x="1806" y="768">18-</text><text x="1851" y="768">-18</text><text x="1806" y="797">24-</text><text x="1851" y="797">-24</text>
<text x="1806" y="827">30-</text><text x="1851" y="827">-30</text><text x="1806" y="856">36-</text><text x="1851" y="856">-36</text>
<text x="1806" y="886">42-</text><text x="1851" y="886">-42</text><text x="1806" y="916">48-</text><text x="1851" y="916">-48</text>
<text x="1828" y="630">-0-</text><text x="1828" y="660">-6-</text><text x="1828" y="689">-12-</text><text x="1828" y="719">-18-</text><text x="1828" y="748">-24-</text><text x="1828" y="778">-30-</text><text x="1828" y="807">-36-</text><text x="1828" y="837">-42-</text><text x="1828" y="867">-48-</text><text x="1828" y="896">-54-</text>
</g>
<g class="pk"><text x="1812.500" y="615" textLength="23" lengthAdjust="spacingAndGlyphs">-78.4</text><text x="1842.500" y="615" textLength="23" lengthAdjust="spacingAndGlyphs">-78.5</text><text x="1812.500" y="928" textLength="23" lengthAdjust="spacingAndGlyphs">-82.3</text><text x="1842.500" y="928" textLength="23" lengthAdjust="spacingAndGlyphs">-82.5</text></g>
<path d="M1894 908L1900 902L1906 908" fill="none" stroke="#666" stroke-width="1.300"/><circle cx="1894" cy="908" r="2.200" fill="#666"/><circle cx="1900" cy="902" r="2.200" fill="#666"/><circle cx="1906" cy="908" r="2.200" fill="#666"/>
<text x="1900" y="923" font-size="10.500" font-weight="bold" text-anchor="middle" fill="#666">TR</text>
<rect x="1795" y="940" width="125" height="19" fill="#3b3b3b"/>
<circle cx="1805" cy="949" r="7" fill="none" stroke="#888"/><text x="1805" y="953" font-size="9.500" text-anchor="middle" fill="#888">i</text>
<text x="1867" y="953.500" font-size="11" text-anchor="middle" fill="#b5b5b5" textLength="42" lengthAdjust="spacingAndGlyphs">MASTER</text>
<rect x="1800" y="960" width="120" height="1" fill="#222"/>

<!-- bottom -->
<rect x="0" y="946" width="113" height="14" fill="#474747"/>
<rect x="121" y="947" width="241" height="1" fill="#4a4a4a"/>
<text x="122" y="958" font-size="10" fill="#8a8a8a" textLength="212" lengthAdjust="spacingAndGlyphs">CPU: 14.9%  RAM: 1642MB  last save: 00:37</text>
<path d="M383 950L375 955L383 960Z" fill="#6a6a6a"/>
<rect x="389" y="951" width="1028" height="9" rx="4.500" fill="#4f4f4f"/>
<path d="M1725 950L1733 955.500L1725 961Z" fill="#5e5e5e"/>
<path d="M1745 951V960M1740.500 955.500H1749.500" stroke="#5e5e5e" stroke-width="2.500"/>
<rect x="1754" y="951" width="1" height="9" fill="#222"/>
<rect x="1761" y="954.500" width="8" height="2" fill="#5e5e5e"/>
</svg>
</body></html>
